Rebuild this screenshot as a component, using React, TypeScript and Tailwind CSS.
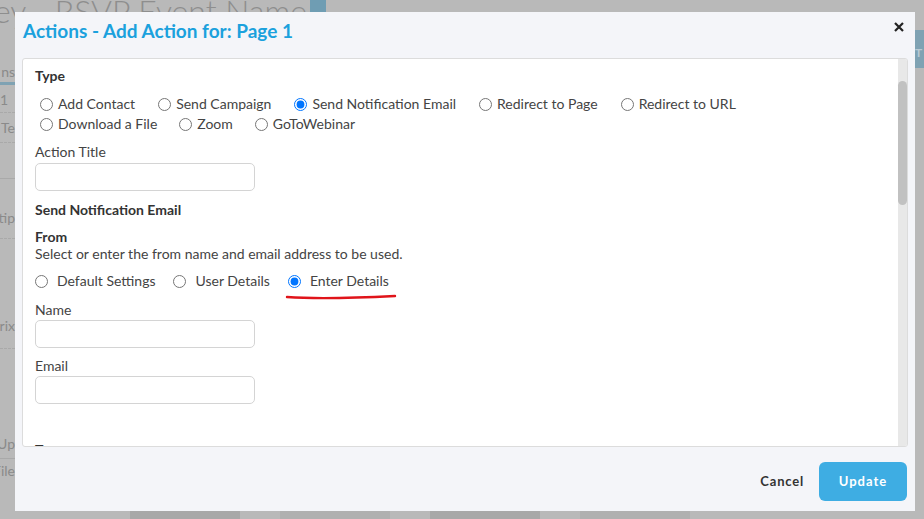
import React from "react"

const font = { fontFamily: "Lato, 'Open Sans', sans-serif" }

function Radio({
  label,
  name,
  checked,
  gap = "gap-[5px]",
}: {
  label: string
  name: string
  checked?: boolean
  gap?: string
}) {
  return (
    <label className={`flex items-center ${gap} text-[14px] leading-5 text-[#444]`}>
      <input
        type="radio"
        name={name}
        defaultChecked={checked}
        className="m-0 h-[13px] w-[13px]"
      />
      <span>{label}</span>
    </label>
  )
}

function Field({ label, top, inputTop }: { label: string; top: string; inputTop: string }) {
  return (
    <div className={`${top} flex flex-col`}>
      <span className="text-[14px] leading-5 text-[#444]">{label}</span>
      <div className={`${inputTop} h-[28px] w-[220px] rounded-[5px] border border-[#d4d4d4] bg-white`} />
    </div>
  )
}

function Side({ text, className }: { text: string; className: string }) {
  return (
    <div className={`flex justify-end overflow-hidden whitespace-nowrap ${className}`}>
      <span>{text}</span>
    </div>
  )
}

export default function App() {
  return (
    <div
      className="relative h-[519px] w-[924px] overflow-hidden bg-[#b9b9b9]"
      style={font}
    >
      {/* page behind the overlay */}
      <div className="absolute left-[-6px] top-[-13px] whitespace-nowrap text-[32px] font-light text-[#8e8e8e]">
        ey - RSVP Event Name
      </div>
      <div className="absolute left-[310px] top-0 h-[12px] w-[16px] bg-[#6f9db3]" />
      <div className="absolute left-[910px] top-[30px] h-[38px] w-[14px] bg-[#7fa2b3] pl-[5px] pt-[14px] text-[12px] font-bold text-[#b9c9d2]">
        T
      </div>
      <div className="absolute left-0 top-[57px] flex w-[15px] flex-col text-[14px] text-[#8a8a8a]">
        <Side text="ns" className="h-[28px] border-b-[3px] border-[#7fa2b3] pt-[4px]" />
        <Side text="1" className="h-[28px] border-b border-dashed border-[#a9a9a9] pt-[4px] !justify-start" />
        <Side text="e Te" className="h-[30px] border-b border-dashed border-[#a9a9a9] pt-[4px]" />
        <div className="h-[36px] border-b border-[#a9a9a9]" />
        <Side text="tip" className="h-[60px] border-b border-dashed border-[#a9a9a9] pt-[28px]" />
        <Side text="rix" className="h-[110px] border-b border-dashed border-[#a9a9a9] pt-[76px]" />
        <Side text="Up" className="h-[110px] border-b border-[#a9a9a9] pt-[84px]" />
        <Side text="se File" className="pt-[1px]" />
      </div>
      <div className="absolute bottom-0 left-[130px] flex h-[8px] w-[790px] gap-[40px]">
        <div className="h-full w-[110px] bg-[#a8a8a8]" />
        <div className="h-full w-[110px] bg-[#b0b0b0]" />
        <div className="h-full w-[110px] bg-[#a8a8a8]" />
        <div className="h-full w-[110px] bg-[#b0b0b0]" />
      </div>

      {/* modal */}
      <div className="absolute left-[15px] top-[12px] flex h-[499px] w-[900px] flex-col bg-[#f4f5f9]">
        <div className="flex h-[46px] items-start justify-between pl-[8px] pr-[11px] pt-[7px]">
          <h1 className="text-[19px] font-bold leading-6 text-[#1ba1dd]">
            Actions - Add Action for: Page 1
          </h1>
          <svg width="10" height="10" viewBox="0 0 10 10" className="mt-[3px]">
            <path d="M1 1L9 9M9 1L1 9" stroke="#222" strokeWidth="2.2" />
          </svg>
        </div>

        <div className="mx-[7px] flex h-[389px] overflow-hidden rounded-[3px] border border-[#dcdcdc] bg-white">
          <div className="flex flex-1 flex-col overflow-hidden pl-[12px] pt-[7px]">
            <span className="text-[14px] font-bold leading-5 text-[#333]">Type</span>
            <div className="mt-[8px] flex flex-col pl-[5px]">
              <div className="flex gap-[23px]">
                <Radio name="type" label="Add Contact" />
                <Radio name="type" label="Send Campaign" />
                <Radio name="type" label="Send Notification Email" checked />
                <Radio name="type" label="Redirect to Page" />
                <Radio name="type" label="Redirect to URL" />
              </div>
              <div className="flex gap-[22px]">
                <Radio name="type" label="Download a File" />
                <Radio name="type" label="Zoom" />
                <Radio name="type" label="GoToWebinar" />
              </div>
            </div>
            <Field label="Action Title" top="mt-[8px]" inputTop="mt-[1px]" />

            <span className="mt-[9px] text-[14px] font-bold leading-5 text-[#333]">
              Send Notification Email
            </span>
            <span className="mt-[9px] text-[14px] font-bold leading-4 text-[#333]">From</span>
            <span className="text-[14px] leading-[18px] text-[#444]">
              Select or enter the from name and email address to be used.
            </span>
            <div className="relative mt-[8px] flex gap-[18px]">
              <Radio name="from" label="Default Settings" gap="gap-[9px]" />
              <Radio name="from" label="User Details" gap="gap-[9px]" />
              <Radio name="from" label="Enter Details" checked gap="gap-[9px]" />
              <svg
                width="116"
                height="8"
                viewBox="0 0 116 8"
                className="absolute left-[250px] top-[22px]"
              >
                <path
                  d="M2 4 C 30 6, 70 5, 110 3"
                  stroke="#e0141a"
                  strokeWidth="2.4"
                  fill="none"
                  strokeLinecap="round"
                />
              </svg>
            </div>
            <Field label="Name" top="mt-[9px]" inputTop="mt-0" />
            <Field label="Email" top="mt-[8px]" inputTop="mt-0" />
            <span className="mt-[36px] text-[14px] font-bold leading-5 text-[#333]">To</span>
          </div>
          <div className="w-[9px] bg-[#e8e8e8] pt-[22px]">
            <div className="h-[124px] rounded-full bg-[#c1c1c1]" />
          </div>
        </div>

        <div className="flex flex-1 items-start justify-end gap-[15px] pr-[8px] pt-[15px]">
          <button className="mt-[10px] text-[13px] font-bold tracking-[0.8px] text-[#333]">
            Cancel
          </button>
          <button className="h-[39px] w-[88px] rounded-[6px] bg-[#3eade3] text-[13px] font-bold tracking-[1px] text-white">
            Update
          </button>
        </div>
      </div>
    </div>
  )
}
